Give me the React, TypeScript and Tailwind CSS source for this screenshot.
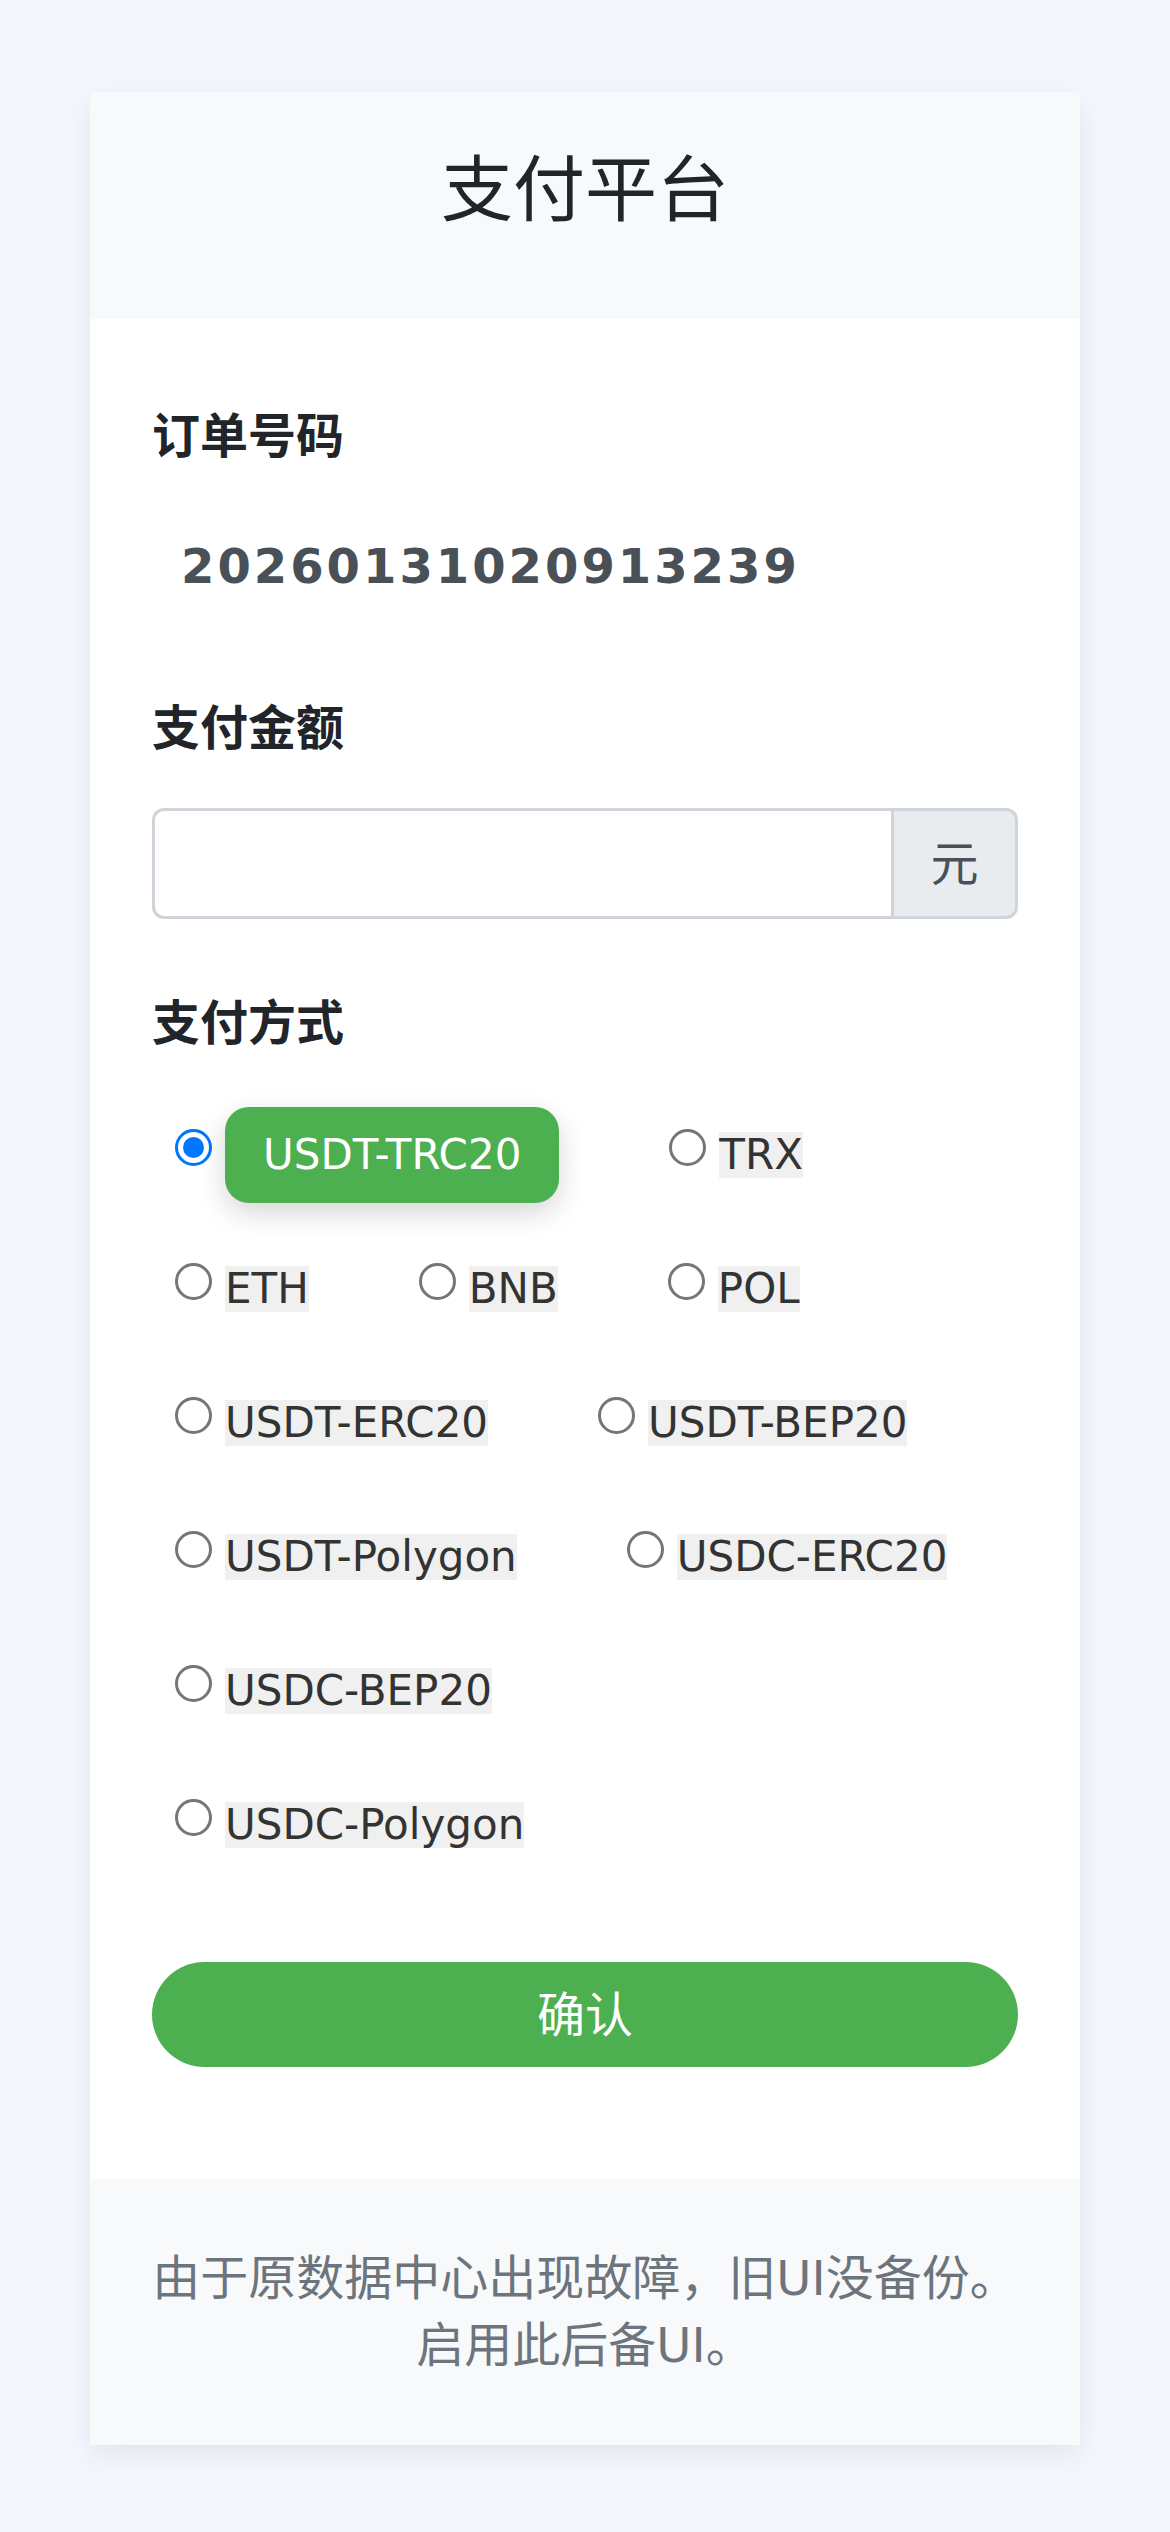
const font = { fontFamily: '"DejaVu Sans", "Noto Sans CJK SC", sans-serif' };

const rows: string[][] = [
  ["USDT-TRC20", "TRX"],
  ["ETH", "BNB", "POL"],
  ["USDT-ERC20", "USDT-BEP20"],
  ["USDT-Polygon", "USDC-ERC20"],
  ["USDC-BEP20"],
  ["USDC-Polygon"],
];

function Radio({ checked }: { checked: boolean }) {
  return checked ? (
    <span className="mr-[13px] mb-[16px] flex h-[37px] w-[37px] shrink-0 items-center justify-center rounded-full border-[3px] border-[#0075ff] bg-white">
      <span className="h-[21px] w-[21px] rounded-full bg-[#0075ff]" />
    </span>
  ) : (
    <span className="mr-[13px] mb-[16px] h-[37px] w-[37px] shrink-0 rounded-full border-[3px] border-[#767676] bg-white" />
  );
}

function Option({ name, selected }: { name: string; selected: boolean }) {
  return (
    <label className="flex items-center">
      <Radio checked={selected} />
      {selected ? (
        <span className="whitespace-nowrap rounded-[24px] bg-[#4caf50] px-[38px] py-[24px] text-[42px] leading-[48px] text-white shadow-[0_10px_28px_rgba(0,0,0,0.16)]">
          {name}
        </span>
      ) : (
        <span className="whitespace-nowrap bg-[#f0f0f0] text-[42px] leading-[46px] text-[#333]">{name}</span>
      )}
    </label>
  );
}

export default function App() {
  const selected = "USDT-TRC20";

  return (
    <div className="min-h-[2532px] bg-[#f4f7fd] px-[90px] pt-[92px]" style={font}>
      <div className="bg-white shadow-[0_10px_30px_rgba(0,0,0,0.08)]">
        <header className="bg-[#f8f9fa] pt-[55px] pb-[86px] text-center">
          <h1 className="text-[72px] font-normal leading-[86px] text-[#212529]">支付平台</h1>
        </header>

        <div className="px-[62px] pt-[81px] pb-[112px] text-[#212529]">
          <h2 className="text-[48px] font-bold leading-[72px]">订单号码</h2>
          <div className="mt-[58px] pl-[29px] text-[48px] font-bold leading-[72px] tracking-[3px] text-[#495057]">
            20260131020913239
          </div>

          <h2 className="mt-[90px] text-[48px] font-bold leading-[72px]">支付金额</h2>
          <div className="mt-[44px] flex h-[111px]">
            <input
              type="text"
              className="min-w-0 flex-1 rounded-l-[12px] border-[3px] border-[#ced4da] bg-white px-[36px] text-[48px] outline-none"
            />
            <span className="flex w-[124px] items-center justify-center rounded-r-[12px] border-[3px] border-l-0 border-[#ced4da] bg-[#e9ecef] text-[48px] text-[#495057]">
              元
            </span>
          </div>

          <h2 className="mt-[68px] text-[48px] font-bold leading-[72px]">支付方式</h2>
          <div className="mt-[29px]">
            {rows.map((row, i) => (
              <div key={i} className="flex h-[134px] items-center gap-[110px] pl-[23px]">
                {row.map((name) => (
                  <Option key={name} name={name} selected={name === selected} />
                ))}
              </div>
            ))}
          </div>

          <button className="mt-[70px] h-[105px] w-full rounded-full bg-[#4caf50] text-[48px] text-white">
            确认
          </button>
        </div>

        <footer className="bg-[#f8f9fa] px-[40px] py-[66px] text-center text-[48px] leading-[67px] text-[#6c757d]">
          <p className="whitespace-nowrap">由于原数据中心出现故障，旧UI没备份。</p>
          <p className="whitespace-nowrap">启用此后备UI。</p>
        </footer>
      </div>
    </div>
  );
}
